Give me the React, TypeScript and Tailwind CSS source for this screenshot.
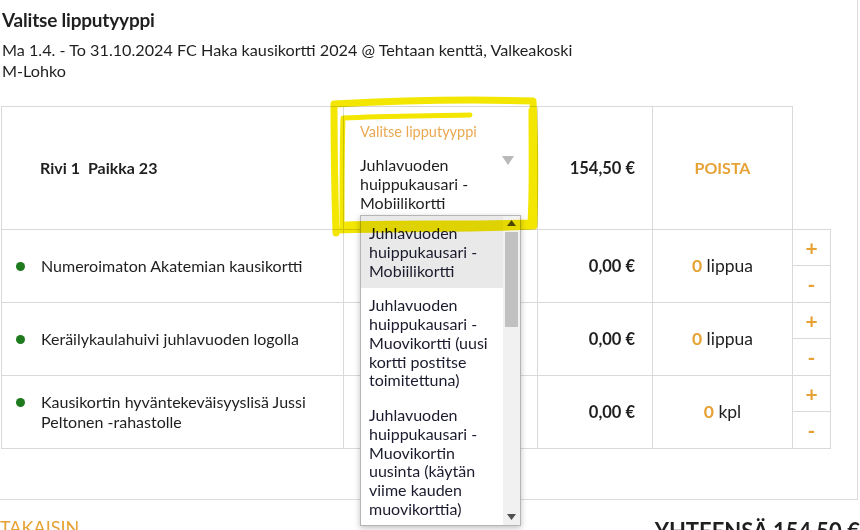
import React from 'react';

const orange = 'text-[#e6a235]';

const extras = [
  { name: 'Numeroimaton Akatemian kausikortti', unit: 'lippua' },
  { name: 'Keräilykaulahuivi juhlavuoden logolla', unit: 'lippua' },
  { name: 'Kausikortin hyväntekeväisyyslisä Jussi Peltonen -rahastolle', unit: 'kpl' },
];

const options = [
  'Juhlavuoden huippukausari - Mobiilikortti',
  'Juhlavuoden huippukausari - Muovikortti (uusi kortti postitse toimitettuna)',
  'Juhlavuoden huippukausari - Muovikortin uusinta (käytän viime kauden muovikorttia)',
];

const App: React.FC = () => {
  return (
    <div className="relative w-[860px] h-[530px] overflow-hidden bg-white text-[#1f1f1f] font-['Lato',sans-serif]">
      {/* Main panel */}
      <div className="w-[858px] h-[500px] border-r border-b border-[#dcdcdc]">
        <h1 className="pl-[2px] pt-[9px] text-[19px] leading-[22px] font-bold tracking-[-0.2px]">Valitse lipputyyppi</h1>
        <p className="pl-[2px] pt-[8px] text-[16.2px] leading-[21px]">
          Ma 1.4. - To 31.10.2024 FC Haka kausikortti 2024 @ Tehtaan kenttä, Valkeakoski
          <br />
          M-Lohko
        </p>

        <table className="ml-[1px] mt-[25px] border-collapse table-fixed w-[829px] text-[16px]">
          <colgroup>
            <col className="w-[342px]" />
            <col className="w-[194px]" />
            <col className="w-[115px]" />
            <col className="w-[140px]" />
            <col className="w-[38px]" />
          </colgroup>
          <tbody>
            <tr className="h-[123px]">
              <td className="border border-[#d9d9d9] pl-[38px] align-middle">
                <span className="font-bold text-[16px]">Rivi 1</span>
                <span className="font-bold text-[16px] ml-[8px]">Paikka 23</span>
              </td>
              <td className="border border-[#d9d9d9] pl-[16px] pr-[20px] align-top pt-[16px]">
                <div className="text-[14.5px] leading-[18px] text-[#eaa952]">Valitse lipputyyppi</div>
                <div className="relative mt-[14px] text-[16px] leading-[19px]">
                  Juhlavuoden huippukausari - Mobiilikortti
                  <svg className="absolute right-[3px] top-[1px]" width="12" height="9" viewBox="0 0 12 9">
                    <path d="M0 0 L12 0 L6 9 Z" fill="#b9b9b9" />
                  </svg>
                </div>
              </td>
              <td className="border border-[#d9d9d9] pr-[17px] text-right font-bold text-[16.5px]">154,50 €</td>
              <td className={`border border-[#d9d9d9] text-center font-bold text-[16px] ${orange}`}>POISTA</td>
              <td className="border-0" />
            </tr>
            {extras.map((e, i) => (
              <tr key={i} className={i === 1 ? 'h-[72px]' : 'h-[73px]'}>
                <td className="border border-[#d9d9d9] pl-[14px] pr-[10px]">
                  <div className="flex items-start gap-[16px]">
                    <span className="mt-[6px] w-[9px] h-[9px] shrink-0 rounded-full bg-[#1d7a1d]" />
                    <span className="leading-[20px]">{e.name}</span>
                  </div>
                </td>
                <td className="border border-[#d9d9d9]" />
                <td className="border border-[#d9d9d9] pr-[17px] text-right font-bold text-[16.5px]">0,00 €</td>
                <td className="border border-[#d9d9d9] text-center text-[17.5px]">
                  <span className={`font-bold ${orange}`}>0</span> {e.unit}
                </td>
                <td className="border border-[#d9d9d9] p-0">
                  <div className={`flex flex-col font-bold text-[21px] ${orange}`}>
                    <div className="h-[36px] flex items-center justify-center border-b border-[#d9d9d9]">+</div>
                    <div className="h-[36px] flex items-center justify-center">-</div>
                  </div>
                </td>
              </tr>
            ))}
          </tbody>
        </table>
      </div>

      {/* Footer */}
      <div className="flex justify-between items-start mt-[14px]">
        <span className={`text-[18px] ${orange}`}>TAKAISIN</span>
        <span className="text-[22px] font-bold whitespace-nowrap">YHTEENSÄ 154,50 €</span>
      </div>

      {/* Open select list */}
      <div className="absolute left-[360px] top-[215px] w-[161px] h-[311px] bg-white border border-[#b5b5b5] shadow-[0_2px_6px_rgba(0,0,0,0.25)] flex overflow-hidden">
        <div className="flex-1 text-[16px] leading-[18.75px] text-[#1b1b2e]">
          {options.map((o, i) => (
            <div key={i} className={`px-[8px] py-[8px] ${i === 0 ? 'bg-[#e9e9e9]' : ''}`}>{o}</div>
          ))}
        </div>
        <div className="w-[17px] bg-[#f1f1f1] flex flex-col items-center">
          <svg className="mt-[4px]" width="9" height="6" viewBox="0 0 9 6"><path d="M0 6 L4.5 0 L9 6 Z" fill="#505050" /></svg>
          <div className="mt-[6px] w-[13px] h-[95px] bg-[#c1c1c1]" />
          <div className="flex-1" />
          <svg className="mb-[5px]" width="9" height="6" viewBox="0 0 9 6"><path d="M0 0 L9 0 L4.5 6 Z" fill="#505050" /></svg>
        </div>
      </div>

      {/* Yellow highlighter mark */}
      <svg className="absolute left-0 top-0 pointer-events-none mix-blend-multiply" width="860" height="530">
        <path
          d="M336 233 C335 200 334 140 334 104 C390 101 470 99 533 101 C535 140 535 190 534 226 C470 229 400 228 338 230"
          fill="none" stroke="#f3e600" strokeWidth="7" strokeLinecap="round" strokeLinejoin="round"
        />
        <path
          d="M342 226 C342 190 342 150 343 118 C380 116 420 116 470 115 M531 110 C531 150 532 190 530 222 C470 224 400 222 346 224"
          fill="none" stroke="#f3e600" strokeWidth="5" strokeLinecap="round" strokeLinejoin="round"
        />
      </svg>
    </div>
  );
};

export default App;
